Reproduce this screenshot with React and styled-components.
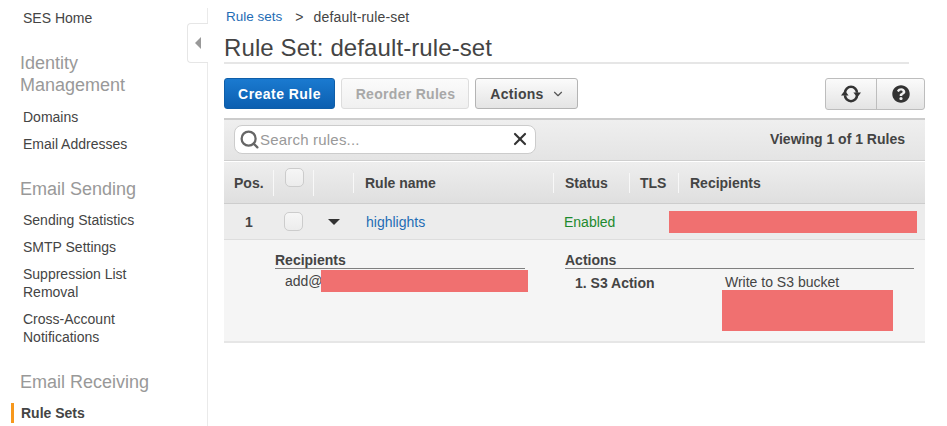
import React from 'react'
import styled, { createGlobalStyle } from 'styled-components'
import { Search, X, ChevronDown } from 'lucide-react'
import { FaQuestionCircle } from 'react-icons/fa'

const GlobalStyle = createGlobalStyle`
  html, body {
    margin: 0;
    padding: 0;
    height: 426px;
    overflow: hidden;
    background: #ffffff;
    font-family: "Liberation Sans", Arial, sans-serif;
    font-size: 14px;
    color: #444444;
  }
  * { box-sizing: border-box; }
`

const Page = styled.div`
  display: flex;
  width: 947px;
  height: 426px;
  overflow: hidden;
`

const Sidebar = styled.nav`
  position: relative;
  flex: 0 0 208px;
  height: 418px;
  margin-top: 8px;
  padding: 1px 0 0 20px;
  border-right: 1px solid #eaeaea;
`

const CollapseTab = styled.div`
  position: absolute;
  top: 15px;
  right: -1px;
  width: 21px;
  height: 40px;
  display: flex;
  align-items: center;
  justify-content: center;
  background: #ffffff;
  border: 1px solid #e6e6e6;
  border-right: none;
  border-radius: 4px 0 0 4px;

  &::before {
    content: '';
    border-style: solid;
    border-width: 6px 6px 6px 0;
    border-color: transparent #999999 transparent transparent;
  }
`

const NavLink = styled.div`
  margin-left: 3px;
  margin-bottom: 9px;
  font-size: 14px;
  line-height: 18px;
  color: #444444;
`

const NavHeading = styled.div`
  font-size: 18px;
  line-height: 22px;
  color: #999999;
  margin: ${p => p.$top}px 0 ${p => p.$bottom ?? 11}px;
`

const ActiveLink = styled.div`
  position: relative;
  margin-left: 1px;
  font-size: 14px;
  line-height: 18px;
  font-weight: bold;
  color: #444444;

  &::before {
    content: '';
    position: absolute;
    left: -10px;
    top: -1px;
    width: 3px;
    height: 20px;
    background: #f7981d;
  }
`

const Main = styled.main`
  flex: 0 0 717px;
  padding: 8px 0 0 16px;
`

const Breadcrumb = styled.div`
  display: flex;
  align-items: center;
  height: 17px;
  padding-left: 2px;
  font-size: 14px;
  letter-spacing: 0.15px;
  color: #444444;
`

const CrumbLink = styled.a`
  font-size: 13.5px;
  letter-spacing: 0;
  color: #1f6db5;
  margin-right: 13px;
`

const CrumbSep = styled.span`
  margin-right: 10px;
`

const Title = styled.h1`
  width: 685px;
  height: 39px;
  margin: 0 0 14px;
  padding-top: 9px;
  font-size: 24px;
  line-height: 28px;
  letter-spacing: 0.1px;
  font-weight: normal;
  color: #444444;
  border-bottom: 2px solid #e6e6e6;
`

const Toolbar = styled.div`
  display: flex;
  align-items: flex-start;
  gap: 6px;
  height: 40px;
`

const Button = styled.button`
  height: 31px;
  width: ${p => p.$width}px;
  display: flex;
  align-items: center;
  justify-content: center;
  gap: 7px;
  padding: 0;
  font-family: inherit;
  font-size: 14px;
  font-weight: bold;
  letter-spacing: 0.3px;
  border-radius: 3px;
  color: #444444;
  border: 1px solid #b4b4b4;
  background: linear-gradient(#fbfbfb, #e4e4e4);
`

const PrimaryButton = styled(Button)`
  color: #ffffff;
  letter-spacing: 0.45px;
  border-color: #0f5ea8;
  background: linear-gradient(#1a7ad0, #0c5fb0);
`

const DisabledButton = styled(Button)`
  padding-left: 1px;
  color: #a8a8a8;
  border-color: #dddddd;
  background: linear-gradient(#fbfbfb, #f0f0f0);
`

const MenuButton = styled(Button)`
  padding-left: 2px;
`

const ButtonGroup = styled.div`
  display: flex;
  height: 32px;
  margin-left: auto;
  border: 1px solid #bdbdbd;
  border-radius: 3px;
  background: linear-gradient(#fbfbfb, #e4e4e4);
`

const GroupItem = styled.div`
  width: ${p => p.$width}px;
  display: flex;
  align-items: center;
  justify-content: center;
  color: #333333;
  & + & { border-left: 1px solid #bdbdbd; }
`

const FilterBar = styled.div`
  display: flex;
  align-items: center;
  justify-content: space-between;
  height: 43px;
  padding: 0 20px 2px 10px;
  border-top: 2px solid #cccccc;
  border-bottom: 1px solid #cfcfcf;
  background: linear-gradient(#efefef, #e4e4e4);
`

const SearchBox = styled.div`
  display: flex;
  align-items: center;
  width: 302px;
  height: 29px;
  padding: 0 5px 0 4px;
  background: #ffffff;
  border: 1px solid #cccccc;
  border-radius: 8px;
  color: #666666;
`

const SearchText = styled.span`
  flex: 1;
  font-size: 15px;
  letter-spacing: 0.2px;
  color: #999999;
`

const ViewCount = styled.span`
  font-size: 14px;
  font-weight: bold;
  color: #444444;
`

const columns = '50px 40px 40px 200px 76px 49px 1fr'

const HeaderRow = styled.div`
  display: grid;
  grid-template-columns: ${columns};
  align-items: center;
  height: 43px;
  border-top: 1px solid #ffffff;
  border-bottom: 1px solid #cdcdcd;
  background: linear-gradient(#eeeeee, #dfdfdf);
`

const HeaderCell = styled.div`
  position: relative;
  height: 20px;
  display: flex;
  align-items: center;
  padding-left: ${p => p.$pad ?? 11}px;
  font-size: 14px;
  font-weight: bold;
  color: #444444;

  &::after {
    content: '';
    position: absolute;
    right: 0;
    top: ${p => p.$tall ? -3 : 0}px;
    bottom: ${p => p.$tall ? -3 : 0}px;
    width: 1px;
    display: ${p => p.$last ? 'none' : 'block'};
    background: #f8f8f8;
  }
`

const Check = styled.span`
  display: block;
  width: 19px;
  height: 19px;
  border: 1px solid #cccccc;
  border-radius: 5px;
  background: linear-gradient(#f6f6f6, #ececec);
`

const HeaderCheck = styled(Check)`
  margin-top: -10px;
`

const DataRow = styled.div`
  display: grid;
  grid-template-columns: ${columns};
  align-items: center;
  height: 36px;
  border-bottom: 1px solid #dddddd;
  background: #ececec;
`

const DataCell = styled.div`
  display: flex;
  align-items: center;
  padding-left: ${p => p.$pad ?? 12}px;
  font-size: 14px;
`

const PosCell = styled(DataCell)`
  font-weight: bold;
  padding-left: 21px;
`

const Caret = styled.span`
  width: 0;
  height: 0;
  border-style: solid;
  border-width: 6px 6px 0 6px;
  border-color: #333333 transparent transparent transparent;
`

const RuleLink = styled.a`
  color: #1f6db5;
`

const EnabledText = styled.span`
  color: #1d8a2e;
`

const Redaction = styled.div`
  flex: none;
  width: ${p => p.$w}px;
  height: ${p => p.$h}px;
  background: #f07070;
`

const RowRedaction = styled(Redaction)`
  margin-left: -10px;
`

const AddressRedaction = styled(Redaction)`
  margin-left: -2px;
`

const Details = styled.div`
  display: flex;
  height: 103px;
  padding: 12px 11px 0 51px;
  border-bottom: 2px solid #e6e6e6;
  background: #f5f5f5;
`

const DetailColumn = styled.section`
  width: ${p => p.$width}px;
  margin-right: ${p => p.$gap ?? 0}px;
`

const DetailTitle = styled.div`
  height: 17px;
  font-size: 14px;
  line-height: 16px;
  font-weight: bold;
  color: #444444;
  border-bottom: 1px solid #7f7f7f;
`

const RecipientLine = styled.div`
  display: flex;
  width: 253px;
  padding: 1px 0 0 10px;
  font-size: 14px;
  line-height: 22px;
`

const ActionLine = styled.div`
  display: grid;
  grid-template-columns: 150px 1fr;
  padding: 5px 0 0 10px;
  font-size: 14px;
  line-height: 18px;
`

const ActionName = styled.span`
  font-weight: bold;
`

const ActionValue = styled.div`
  margin-top: -1px;
`

const ValueRedaction = styled(Redaction)`
  margin: -1px 0 0 -3px;
`

const RefreshIcon = () => (
  <svg width="22" height="20" viewBox="0 0 22 20" fill="none">
    <path d="M5 8.8 A6 6 0 0 1 17 8.8" stroke="#333333" strokeWidth="2.6" />
    <path d="M13.4 8.6 H21 L17.2 13.4 Z" fill="#333333" />
    <path d="M17 11.2 A6 6 0 0 1 5 11.2" stroke="#333333" strokeWidth="2.6" />
    <path d="M1 11.4 H8.6 L4.8 6.6 Z" fill="#333333" />
  </svg>
)

const App = () => (
  <Page>
    <GlobalStyle />
    <Sidebar>
      <CollapseTab />
      <NavLink>SES Home</NavLink>
      <NavHeading $top={25} $bottom={12}>Identity<br />Management</NavHeading>
      <NavLink>Domains</NavLink>
      <NavLink>Email Addresses</NavLink>
      <NavHeading $top={25}>Email Sending</NavHeading>
      <NavLink>Sending Statistics</NavLink>
      <NavLink>SMTP Settings</NavLink>
      <NavLink>Suppression List<br />Removal</NavLink>
      <NavLink>Cross-Account<br />Notifications</NavLink>
      <NavHeading $top={25}>Email Receiving</NavHeading>
      <ActiveLink>Rule Sets</ActiveLink>
    </Sidebar>
    <Main>
      <Breadcrumb>
        <CrumbLink>Rule sets</CrumbLink>
        <CrumbSep>&gt;</CrumbSep>
        default-rule-set
      </Breadcrumb>
      <Title>Rule Set: default-rule-set</Title>
      <Toolbar>
        <PrimaryButton $width={111}>Create Rule</PrimaryButton>
        <DisabledButton $width={128}>Reorder Rules</DisabledButton>
        <MenuButton $width={103}>Actions <ChevronDown size={14} strokeWidth={2} color="#555555" /></MenuButton>
        <ButtonGroup>
          <GroupItem $width={50}><RefreshIcon /></GroupItem>
          <GroupItem $width={48}><FaQuestionCircle size={18} /></GroupItem>
        </ButtonGroup>
      </Toolbar>
      <FilterBar>
        <SearchBox>
          <Search size={21} strokeWidth={2.6} />
          <SearchText>Search rules...</SearchText>
          <X size={20} strokeWidth={2.6} color="#333333" />
        </SearchBox>
        <ViewCount>Viewing 1 of 1 Rules</ViewCount>
      </FilterBar>
      <HeaderRow>
        <HeaderCell $pad={10} $tall>Pos.</HeaderCell>
        <HeaderCell $pad={11} $tall><HeaderCheck /></HeaderCell>
        <HeaderCell />
        <HeaderCell>Rule name</HeaderCell>
        <HeaderCell>Status</HeaderCell>
        <HeaderCell $pad={10}>TLS</HeaderCell>
        <HeaderCell $last>Recipients</HeaderCell>
      </HeaderRow>
      <DataRow>
        <PosCell>1</PosCell>
        <DataCell $pad={10}><Check /></DataCell>
        <DataCell $pad={14}><Caret /></DataCell>
        <DataCell><RuleLink>highlights</RuleLink></DataCell>
        <DataCell $pad={10}><EnabledText>Enabled</EnabledText></DataCell>
        <DataCell />
        <DataCell $pad={0}><RowRedaction $w={248} $h={22} /></DataCell>
      </DataRow>
      <Details>
        <DetailColumn $width={250} $gap={40}>
          <DetailTitle>Recipients</DetailTitle>
          <RecipientLine>add@<AddressRedaction $w={207} $h={22} /></RecipientLine>
        </DetailColumn>
        <DetailColumn $width={349}>
          <DetailTitle>Actions</DetailTitle>
          <ActionLine>
            <ActionName>1. S3 Action</ActionName>
            <ActionValue>
              Write to S3 bucket
              <ValueRedaction $w={171} $h={41} />
            </ActionValue>
          </ActionLine>
        </DetailColumn>
      </Details>
    </Main>
  </Page>
)

export default App
